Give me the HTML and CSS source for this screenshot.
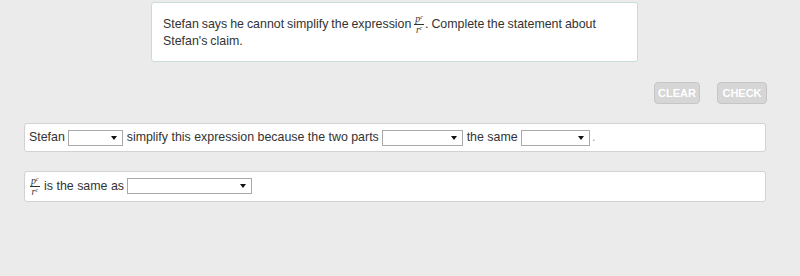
FILE: index.html
```html
<!DOCTYPE html>
<html lang="en">
<head>
    <meta charset="UTF-8">
    <meta name="viewport" content="width=device-width, initial-scale=1.0">
    <title>Stefan's claim</title>
    <link rel="stylesheet" href="styles.css">
</head>
<body>
    <div class="page">
        <div class="prompt">
            Stefan says he cannot simplify the expression
            <span class="frac"><span class="num">p<sup>c</sup></span><span class="den">r<sup>c</sup></span></span>. Complete the statement about Stefan's claim.
        </div>

        <div class="actions">
            <button type="button" class="btn btn-clear">CLEAR</button>
            <button type="button" class="btn btn-check">CHECK</button>
        </div>

        <!-- Statement rows -->
        <div class="row">
            Stefan <span class="drop w1"><select></select></span> simplify this expression because the two parts <span class="drop w2"><select></select></span> the same <span class="drop w3"><select></select></span><span class="dot">.</span>
        </div>

        <div class="row row-frac">
            <span class="frac"><span class="num">p<sup>c</sup></span><span class="den">r<sup>c</sup></span></span> is the same as <span class="drop w4"><select></select></span>
        </div>
    </div>
</body>
</html>
```

FILE: styles.css
```css
body {
    margin: 0;
    padding: 0;
    background-color: #ebebeb;
    font-family: Arial, "Liberation Sans", sans-serif;
    font-size: 12.4px;
    color: #333;
}
.page {
    width: 800px;
    height: 276px;
    overflow: hidden;
}
.prompt {
    box-sizing: border-box;
    width: 487px;
    margin: 2px 0 0 151px;
    padding: 13px 12px 11px 11px;
    background-color: #fff;
    border: 1px solid #c9dcdc;
    border-radius: 3px;
    line-height: 17px;
    word-spacing: -0.5px;
}
.frac {
    display: inline-flex;
    flex-direction: column;
    align-items: center;
    vertical-align: middle;
    font-family: "Liberation Serif", serif;
    font-style: italic;
    font-size: 10px;
    line-height: 8px;
    margin: -4px 1px -4px 0;
    word-spacing: 0;
}
.frac .num {
    border-bottom: 1px solid #333;
    padding: 0 1px 1px;
}
.frac .den {
    padding-top: 1px;
}
.frac sup {
    font-size: 6px;
    vertical-align: 3px;
    line-height: 0;
}
.actions {
    display: flex;
    justify-content: flex-end;
    gap: 17px;
    margin: 20px 33px 19px 0;
}
.btn {
    height: 22px;
    padding: 0;
    background-color: #d6d6d6;
    border: 1px solid #c6c6c6;
    border-radius: 4px;
    color: #fff;
    font-family: Arial, "Liberation Sans", sans-serif;
    font-weight: bold;
    font-size: 11px;
}
.btn-clear {
    width: 46px;
}
.btn-check {
    width: 50px;
}
.row {
    box-sizing: border-box;
    margin: 0 34px 19px 24px;
    padding: 5px 4px 5px 4px;
    background-color: #fff;
    border: 1px solid #d2d2d2;
    border-radius: 3px;
    line-height: 16px;
}
.row-frac {
    padding: 6px 5px 7px 5px;
}
.row-frac .frac {
    margin: -3px 1px -3px 0;
}
.drop {
    position: relative;
    display: inline-block;
    vertical-align: middle;
    height: 16px;
}
.drop select {
    -webkit-appearance: none;
    appearance: none;
    box-sizing: border-box;
    width: 100%;
    height: 16px;
    margin: 0;
    padding: 0;
    background-color: #fff;
    border: 1px solid #a9a9a9;
    border-radius: 0;
    display: block;
}
.drop::after {
    content: "";
    position: absolute;
    right: 6px;
    top: 6px;
    border-left: 3px solid transparent;
    border-right: 3px solid transparent;
    border-top: 4px solid #111;
}
.w1 { width: 55px; }
.w2 { width: 81px; }
.w3 { width: 69px; }
.w4 { width: 125px; }
.dot {
    color: #999;
    margin-left: 2px;
}
```
